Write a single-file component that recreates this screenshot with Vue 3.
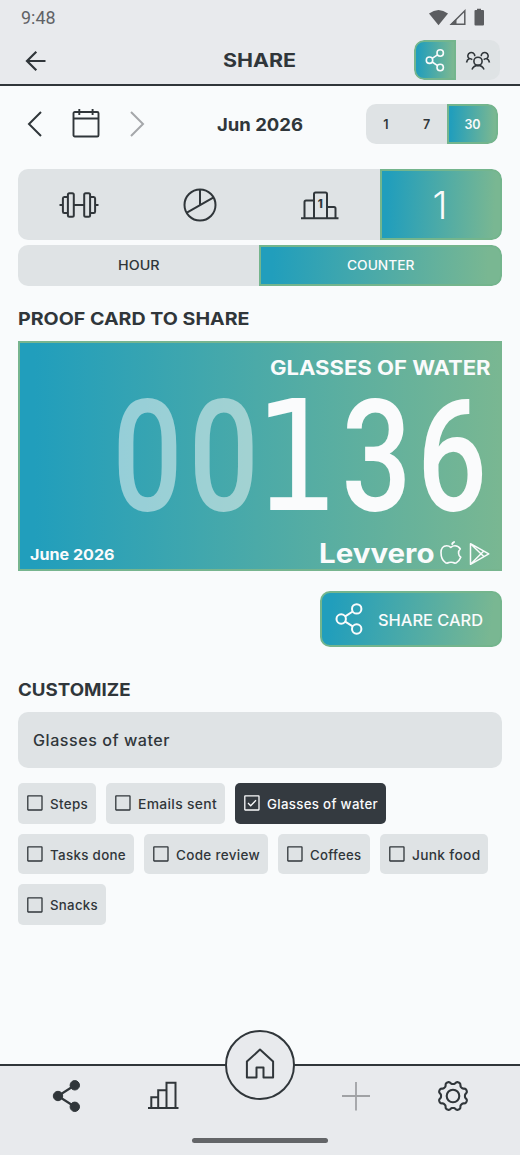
<script setup>
import { ref } from 'vue'

// Sets a label to a fixed measure by stretching its glyphs horizontally.
const vFit = {
  mounted(el, { value }) {
    const natural = el.getBoundingClientRect().width
    el.style.width = `${value}px`
    el.style.transform = `scaleX(${value / natural})`
  },
}

const ranges = ['1', '7', '30']
const range = ref('30')

const chipRows = [
  [
    { label: 'Steps', w: 38 },
    { label: 'Emails sent', w: 79 },
    { label: 'Glasses of water', w: 111 },
  ],
  [
    { label: 'Tasks done', w: 76 },
    { label: 'Code review', w: 84 },
    { label: 'Coffees', w: 51.5 },
    { label: 'Junk food', w: 68.5 },
  ],
  [{ label: 'Snacks', w: 48 }],
]
const selected = ref('Glasses of water')

const gear = Array.from({ length: 144 }, (_, i) => {
  const a = (i / 144) * Math.PI * 2
  const r = 13.3 + 1.45 * Math.tanh(1.6 * Math.cos(8 * (a - Math.PI / 8)))
  return `${(17 + r * Math.cos(a)).toFixed(2)},${(17 + r * Math.sin(a)).toFixed(2)}`
}).join(' ')
</script>

<template>
  <div class="screen">
    <div class="status">
      <span v-fit="34.5" class="clock fit">9:48</span>
      <svg width="58" height="20" viewBox="0 0 58 20">
        <path d="M1 5.5Q10.500 -1.500 20 5.500L10.500 17.200Z" fill="#5b5d60" />
        <path d="M36.800 2.800V16.300H23.300Z" fill="none" stroke="#5b5d60" stroke-width="1.500" />
        <path d="M28.500 10.500V17H22Z" fill="#5b5d60" />
        <path d="M46.500 3Q46.500 2 47.500 2H49V.8H53V2H55Q56 2 56 3V16.500Q56 17.500 55 17.500H47.500Q46.500 17.500 46.500 16.500Z" fill="#5b5d60" />
      </svg>
    </div>

    <header class="header">
      <svg class="back" width="24" height="24" viewBox="0 0 24 24" fill="none" stroke="#30363a" stroke-width="2.200">
        <path d="M21.500 12H3M12.300 2.800L3 12l9.300 9.200" />
      </svg>
      <h1><span v-fit="73" class="title fit">SHARE</span></h1>
      <div class="mode">
        <button class="mode-on">
          <svg width="24" height="26" viewBox="0 0 24 26" fill="none" stroke="#fafbfc" stroke-width="1.600">
            <circle cx="6.500" cy="13.200" r="3.200" /><circle cx="17.200" cy="6" r="3.200" /><circle cx="17.200" cy="20.500" r="3.200" />
            <path d="M9.200 11.400l5.300-3.600M9.200 15l5.300 3.700" />
          </svg>
        </button>
        <button>
          <svg class="people" width="26" height="22" viewBox="0 0 26 22" fill="none" stroke="#30363a" stroke-width="1.600">
            <circle cx="13" cy="11.300" r="4.100" />
            <path d="M7 19.500Q8.500 15.500 13 15.400Q17.500 15.500 19 19.500" />
            <path d="M9.800 6.200A3.500 3.500 0 1 0 3.900 8.500M16.200 6.200A3.500 3.500 0 1 1 22.100 8.500" />
            <path d="M1.500 12.500Q2 9.500 4.500 8.500Q6 8.600 7.300 9.700M24.500 12.500Q24 9.500 21.500 8.500Q20 8.600 18.700 9.700" />
          </svg>
        </button>
      </div>
    </header>

    <main>
      <div class="date-row">
        <svg class="prev" width="16" height="28" viewBox="0 0 16 28" fill="none" stroke="#30363a" stroke-width="2"><path d="M14 2L2 14l12 12" /></svg>
        <svg class="cal" width="28" height="30" viewBox="0 0 28 30" fill="none" stroke="#30363a" stroke-width="1.900">
          <rect x="1.500" y="4" width="25" height="24.500" rx="1.300" /><path d="M1.500 10.500H26.500M7.300 1V7M20.600 1V7" />
        </svg>
        <svg class="next" width="16" height="28" viewBox="0 0 16 28" fill="none" stroke="#a5a7aa" stroke-width="2"><path d="M2 2l12 12L2 26" /></svg>
        <h2><span v-fit="86" class="month fit">Jun 2026</span></h2>
        <div class="ranges">
          <button v-for="r in ranges" :key="r" :class="{ on: r === range }" @click="range = r">{{ r }}</button>
        </div>
      </div>

      <div class="kinds">
        <button>
          <svg width="42" height="28" viewBox="0 0 42 28" fill="none" stroke="#30363a" stroke-width="2">
            <rect x="9.900" y="2.200" width="5.900" height="23.600" rx="1.500" /><rect x="26.200" y="2.200" width="5.900" height="23.600" rx="1.500" />
            <path d="M9.900 6H6.300Q4.900 6 4.900 7.500V20.500Q4.900 22 6.300 22H9.900M32.100 6H35.700Q37.100 6 37.100 7.500V20.500Q37.100 22 35.700 22H32.100M15.800 14H26.200M1.500 14H4.900M37.100 14H40.500" />
          </svg>
        </button>
        <button>
          <svg width="36" height="36" viewBox="0 0 36 36" fill="none" stroke="#30363a" stroke-width="2">
            <circle cx="18" cy="18" r="15.500" /><path d="M18 2.500V18M4.900 25.700L31.200 10.600" />
          </svg>
        </button>
        <button>
          <svg width="40" height="32" viewBox="0 0 40 32" fill="none" stroke="#30363a" stroke-width="2">
            <path d="M1 29.300H38.500M14 29V5Q14 3.500 15.500 3.500H25.500Q27 3.500 27 5V29M4.500 29V13Q4.500 11.500 6 11.500H14M27 18H34Q35.500 18 35.500 19.500V29" />
            <text x="20.300" y="18.700" text-anchor="middle" class="podium-num">1</text>
          </svg>
        </button>
        <button class="on"><span class="thin-one">1</span></button>
      </div>

      <div class="views">
        <button><span v-fit="41.500" class="fit">HOUR</span></button>
        <button class="on"><span v-fit="67.500" class="fit">COUNTER</span></button>
      </div>

      <h3 class="proof"><span v-fit="231.500" class="fit">PROOF CARD TO SHARE</span></h3>

      <section class="card">
        <div class="card-title"><span v-fit="220.500" class="fit">GLASSES OF WATER</span></div>
        <svg class="digits" width="480" height="134" viewBox="20 388 480 134">
          <g class="round faint">
            <text transform="translate(147.500 510) scale(.79 1)">0</text>
            <text transform="translate(223.700 510) scale(.79 1)">0</text>
          </g>
          <text class="footed" transform="translate(296.500 510) scale(.88 1)">1</text>
          <g class="round">
            <text transform="translate(376.500 510) scale(.79 1)">3</text>
            <text transform="translate(452 510) scale(.79 1)">6</text>
          </g>
        </svg>
        <div class="card-foot">
          <span v-fit="84.500" class="card-date fit">June 2026</span>
          <div class="brand">
            <span v-fit="115.500" class="brand-name fit">Levvero</span>
            <svg class="apple" width="22" height="24" viewBox="0 0 22 24" fill="none" stroke="#fafbfc" stroke-width="1.600" stroke-linejoin="round" stroke-linecap="round">
              <path d="M10.800 6.300Q9 4.700 6.700 4.700C3 4.700 1 7.800 1 11.500C1 15.500 3 20 5.500 21.700Q7 22.500 9 21.600Q11 21 13 21.600Q15 22.500 16.500 21.700Q19.300 19.800 20.800 16.200C18 14.500 17.800 10 20.300 8C19 5.700 17 4.700 15 4.700Q12.600 4.700 10.800 6.300Z" />
              <path d="M12.200 3Q12.500 1.500 14 1.100" stroke-width="2" />
            </svg>
            <svg class="play" width="21" height="24" viewBox="0 0 21 24" fill="none" stroke="#fafbfc" stroke-width="1.500" stroke-linejoin="round">
              <path d="M1.500 1.700L19.800 11.800L1.500 22.300ZM1.500 1.700L14.800 14.500M1.500 22.300L14.800 9" />
            </svg>
          </div>
        </div>
      </section>

      <button class="share">
        <svg width="28" height="32" viewBox="0 0 28 32" fill="none" stroke="#fafbfc" stroke-width="2">
          <circle cx="6.200" cy="16" r="4.700" /><circle cx="21.700" cy="5.900" r="4.700" /><circle cx="21.700" cy="26" r="4.700" />
          <path d="M10.200 13.300l7.500-4.800M10.200 18.700l7.500 4.700" />
        </svg>
        <span v-fit="105" class="fit">SHARE CARD</span>
      </button>

      <h3 class="customize"><span v-fit="112.500" class="fit">CUSTOMIZE</span></h3>
      <div class="field"><span v-fit="137" class="fit">Glasses of water</span></div>

      <div class="chips">
        <div v-for="(row, i) in chipRows" :key="i" class="chip-row">
          <button v-for="c in row" :key="c.label" class="chip" :class="{ picked: c.label === selected }" @click="selected = c.label">
            <svg width="16" height="16" viewBox="0 0 16 16" fill="none" stroke="currentColor" stroke-width="1.300">
              <rect x=".8" y=".8" width="14.200" height="14.200" rx=".4" />
              <path v-if="c.label === selected" d="M4 8l2.700 2.700L12 5.200" />
            </svg>
            <span v-fit="c.w" class="fit">{{ c.label }}</span>
          </button>
        </div>
      </div>
    </main>

    <nav class="nav">
      <div class="items">
        <svg width="34" height="34" viewBox="0 0 34 34" fill="#30363a" stroke="#30363a">
          <circle cx="8" cy="17" r="4.700" /><circle cx="24.800" cy="6.300" r="4.700" /><circle cx="24.800" cy="27.800" r="4.700" />
          <path d="M24.800 6.300L8 17l16.800 10.800" fill="none" stroke-width="2.200" />
        </svg>
        <svg width="34" height="34" viewBox="0 0 34 34" fill="none" stroke="#30363a" stroke-width="2">
          <path d="M2 29H32.500M5.300 29V18.300H12.200M12.200 29V11.300H20.500M20.500 29V3.800H29.500V29" />
        </svg>
        <span class="gap"></span>
        <svg width="34" height="34" viewBox="0 0 34 34" fill="none" stroke="#a0a2a5" stroke-width="1.800"><path d="M17 3V31.500M3 17H31" /></svg>
        <svg width="34" height="34" viewBox="0 0 34 34" fill="none" stroke="#30363a" stroke-width="2.100">
          <polygon :points="gear" stroke-linejoin="round" /><circle cx="17" cy="17" r="6.300" />
        </svg>
      </div>
      <button class="home">
        <svg width="32" height="32" viewBox="0 0 32 32" fill="none" stroke="#30363a" stroke-width="2" stroke-linejoin="round">
          <path d="M2.900 13.500L16 1.600L29.100 13.500V29.500H19.500V19.500H12.500V29.500H2.900Z" />
        </svg>
      </button>
      <div class="grip"></div>
    </nav>
  </div>
</template>

<style>
html,
body {
  background: #f9fbfc;
}
</style>

<style scoped>
.screen {
  width: 520px;
  height: 1155px;
  display: flex;
  flex-direction: column;
  overflow: hidden;
  background: #f9fbfc;
  color: #30363a;
  font-family: Inter, 'Liberation Sans', sans-serif;
}
* {
  box-sizing: border-box;
}
svg {
  display: block;
  flex: none;
  overflow: visible;
}
h1,
h2,
h3 {
  margin: 0;
  font-weight: 700;
  line-height: 20px;
}
button {
  border: 0;
  padding: 0;
  margin: 0;
  background: none;
  color: inherit;
  font: inherit;
  display: flex;
  align-items: center;
  justify-content: center;
}
.fit {
  display: inline-block;
  white-space: nowrap;
  transform-origin: left center;
  flex: none;
  text-align: left;
}
.status {
  height: 36px;
  background: #e8eaed;
  display: flex;
  justify-content: space-between;
  padding: 8px 34px 0 21px;
}
.clock {
  font: 400 18px/20px Roboto, sans-serif;
  color: #606266;
}
.header {
  height: 50px;
  background: #e8eaed;
  border-bottom: 2px solid #30363a;
  display: grid;
  grid-template-columns: 222.5px 73px 1fr;
  align-items: center;
}
.back {
  margin-left: 24px;
  margin-top: 2px;
}
.title {
  font-size: 18.5px;
}
.header h1 {
  line-height: 20px;
  display: flex;
}
.mode {
  justify-self: end;
  margin-right: 20px;
  width: 86px;
  height: 40px;
  border-radius: 10px;
  overflow: hidden;
  display: grid;
  grid-template-columns: 42px 44px;
  background: #dfe3e5;
}
.people {
  margin-top: 2px;
}
.mode-on,
.on {
  background: linear-gradient(92deg, #219ebc 5%, #79b792 95%);
  border: 2px solid #74b58d;
  color: #fafbfc;
}
.mode-on {
  border-radius: 10px 0 0 10px;
}
main {
  flex: 1;
  padding: 0 18px;
  display: flex;
  flex-direction: column;
}
.date-row {
  margin-top: 18px;
  height: 40px;
  display: flex;
  align-items: center;
  padding: 0 4px 0 8.5px;
}
.cal {
  margin-left: 29px;
  margin-top: -3px;
}
.next {
  margin-left: 29.5px;
}
.date-row h2 {
  margin-left: 72px;
  margin-top: 1px;
  display: flex;
}
.month {
  font-size: 17.5px;
}
.ranges {
  margin-left: auto;
  width: 132px;
  height: 40px;
  display: grid;
  grid-template-columns: 40px 41px 51px;
  background: #dfe3e5;
  border-radius: 10px;
  overflow: hidden;
  font-size: 12.5px;
  font-weight: 600;
  letter-spacing: 0.4px;
}
.ranges button {
  padding-top: 1px;
}
.ranges .on {
  border-radius: 0 10px 10px 0;
}
.kinds {
  margin-top: 25.3px;
  height: 70.7px;
  display: grid;
  grid-template-columns: 121px 121px 120px 122px;
  background: #dfe3e5;
  border-radius: 10px;
  overflow: hidden;
  flex: none;
}
.kinds .on,
.views .on {
  border-radius: 0 10px 10px 0;
}
.podium-num {
  font: 800 11.5px Inter, sans-serif;
  fill: #30363a;
  stroke: none;
}
.thin-one {
  font-size: 38px;
  font-weight: 300;
  line-height: 40px;
  margin-right: 2px;
}
.views {
  margin-top: 5px;
  height: 41px;
  flex: none;
  display: grid;
  grid-template-columns: 241px 243px;
  background: #dfe3e5;
  border-radius: 10px;
  overflow: hidden;
  font-size: 12.5px;
  font-weight: 500;
  letter-spacing: 0.4px;
}
.views button {
  padding-top: 1px;
}
h3 {
  font-size: 17.5px;
  display: flex;
}
.proof {
  margin-top: 23px;
}
.card {
  margin-top: 12px;
  height: 230px;
  flex: none;
  border: 2px solid #77b58f;
  background: linear-gradient(90deg, #219ebc 3%, #79b792 100%);
  color: #fafbfc;
  display: flex;
  flex-direction: column;
}
.card-title {
  display: flex;
  justify-content: flex-end;
  margin: 13px 10px 0 0;
  height: 24px;
  font-size: 19.5px;
  line-height: 24px;
  font-weight: 700;
}
.digits {
  margin-top: 8px;
  fill: #fafbfc;
  text-anchor: middle;
}
.round {
  font: 500 156px Roboto, sans-serif;
}
.footed {
  font: 400 154px 'DejaVu Sans', sans-serif;
}
.faint {
  opacity: 0.5;
}
.card-foot {
  margin-top: 18px;
  height: 30px;
  padding: 0 10px 0 9.5px;
  display: flex;
  justify-content: space-between;
  align-items: center;
}
.card-date {
  font-size: 15px;
  font-weight: 700;
  line-height: 20px;
  margin-top: 2px;
}
.brand {
  display: flex;
  align-items: center;
  margin-top: -1px;
}
.brand-name {
  font-size: 27px;
  font-weight: 700;
  line-height: 30px;
}
.apple {
  margin-left: 6px;
  margin-top: -2px;
}
.play {
  margin-left: 7px;
}
.share {
  align-self: flex-end;
  margin-top: 20.5px;
  width: 182.5px;
  height: 55.5px;
  flex: none;
  border: 2px solid #74b58d;
  border-radius: 10px;
  background: linear-gradient(98deg, #219ebc 6%, #79b792 94%);
  color: #fafbfc;
  font-size: 15.5px;
  font-weight: 500;
  justify-content: flex-start;
  gap: 15px;
  padding-left: 13px;
}
.share .fit {
  margin-top: 2px;
}
.customize {
  margin-top: 33.5px;
}
.field {
  margin-top: 12px;
  height: 55.5px;
  flex: none;
  border-radius: 10px;
  background: #dfe3e5;
  display: flex;
  align-items: center;
  padding-left: 15px;
  font-size: 15.5px;
  font-weight: 500;
  letter-spacing: 0.5px;
}
.chips {
  margin-top: 15.2px;
  display: flex;
  flex-direction: column;
  gap: 10px;
}
.chip-row {
  display: flex;
  gap: 10px;
}
.chip {
  height: 40.6px;
  border-radius: 5px;
  background: #dfe3e5;
  padding: 0 8px 0 9px;
  gap: 7px;
  font-size: 13px;
  font-weight: 500;
  letter-spacing: 0.3px;
}
.chip .fit {
  margin-top: 1px;
}
.picked {
  background: #343a40;
  color: #fafbfc;
}
.nav {
  position: relative;
  height: 91px;
  flex: none;
  background: #e8eaed;
  border-top: 2px solid #30363a;
}
.items {
  display: grid;
  grid-template-columns: repeat(5, 96.5px);
  justify-content: center;
  justify-items: center;
  padding: 12.5px 1px 0 0;
}
.home {
  position: absolute;
  left: 225px;
  top: -36px;
  width: 70px;
  height: 70px;
  border: 2px solid #30363a;
  border-radius: 50%;
  background: #e8eaed;
  padding-bottom: 2px;
}
.grip {
  position: absolute;
  left: 192px;
  bottom: 12.5px;
  width: 136px;
  height: 5px;
  border-radius: 3px;
  background: #636568;
}
</style>
